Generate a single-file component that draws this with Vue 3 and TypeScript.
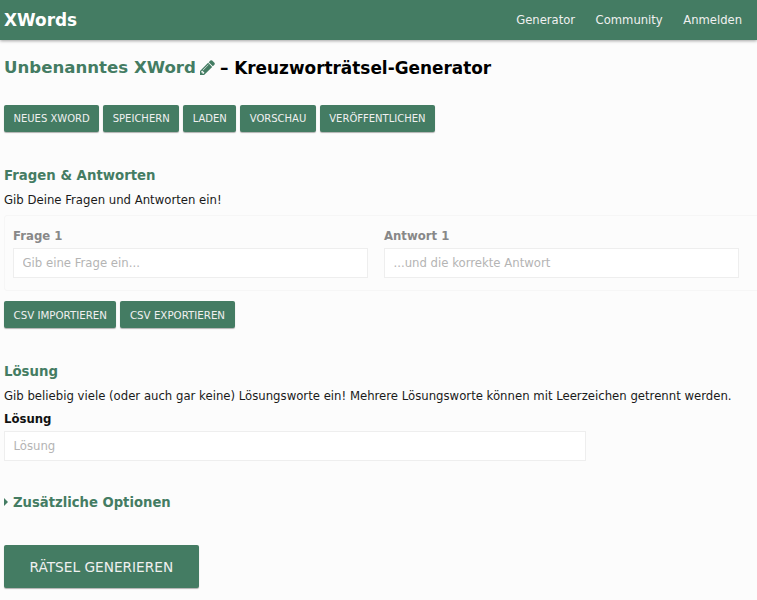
<script setup lang="ts">
const topButtons = ['Neues XWord', 'Speichern', 'Laden', 'Vorschau', 'Veröffentlichen']
const csvButtons = ['CSV importieren', 'CSV exportieren']
const navLinks = ['Generator', 'Community', 'Anmelden']
</script>

<template>
  <div class="page">
    <nav class="navbar">
      <span class="brand">XWords</span>
      <div class="links">
        <a v-for="link in navLinks" :key="link">{{ link }}</a>
      </div>
    </nav>

    <main class="content">
      <h1>
        <span class="name">Unbenanntes XWord</span>
        <svg class="pencil" viewBox="0 0 1536 1536" width="15" height="15">
          <path fill="#447c63" d="M363 1408l91-91-235-235-91 91v107h128v128h107zm523-928q0-22-22-22-10 0-17 7L305 1007q-7 7-7 17 0 22 22 22 10 0 17-7l542-542q7-7 7-17zm-54-192l416 416-832 832H0v-416zm683 96q0 53-37 90l-166 166-416-416 166-165q36-38 90-38 53 0 91 38l235 234q37 39 37 91z" />
        </svg>
        <span class="dash">– Kreuzworträtsel-Generator</span>
      </h1>

      <div class="btn-row top-row">
        <button v-for="b in topButtons" :key="b" class="btn">{{ b }}</button>
      </div>

      <h2 class="first">Fragen &amp; Antworten</h2>
      <p>Gib Deine Fragen und Antworten ein!</p>

      <div class="qa-box">
        <div class="qa-field">
          <label>Frage 1</label>
          <input type="text" placeholder="Gib eine Frage ein..." />
        </div>
        <div class="qa-field">
          <label>Antwort 1</label>
          <input type="text" placeholder="...und die korrekte Antwort" />
        </div>
      </div>

      <div class="btn-row csv-row">
        <button v-for="b in csvButtons" :key="b" class="btn btn-csv">{{ b }}</button>
      </div>

      <h2 class="second">Lösung</h2>
      <p>Gib beliebig viele (oder auch gar keine) Lösungsworte ein! Mehrere Lösungsworte können mit Leerzeichen getrennt werden.</p>
      <label class="solution-label">Lösung</label>
      <input class="solution" type="text" placeholder="Lösung" />

      <div class="options">
        <span class="arrow"></span>
        <span>Zusätzliche Optionen</span>
      </div>

      <button class="btn btn-large">Rätsel generieren</button>
    </main>
  </div>
</template>

<style>
html, body {
  margin: 0;
  overflow: hidden;
  background: #fcfcfc;
}
</style>

<style scoped>
.page {
  width: 757px;
  height: 600px;
  overflow: hidden;
  font-family: "DejaVu Sans", Verdana, sans-serif;
  font-size: 11.7px;
  color: #1a1a1a;
  background: #fcfcfc;
}

.navbar {
  height: 40px;
  background: #447c63;
  box-shadow: 0 1px 3px rgba(0, 0, 0, 0.35);
  display: flex;
  align-items: center;
  justify-content: space-between;
  padding: 0 15px 0 4px;
  color: #f0f0f0;
}

.brand {
  font-size: 16.9px;
  font-weight: bold;
  color: #fff;
}

.links {
  display: flex;
  gap: 20.5px;
  font-size: 11.6px;
}

.content {
  padding: 0 0 0 4px;
}

h1 {
  margin: 18px 0 0;
  height: 20px;
  line-height: 20px;
  font-size: 16.6px;
  font-weight: bold;
  display: flex;
  align-items: center;
  gap: 5px;
  white-space: nowrap;
}

.name {
  color: #447c63;
}

.pencil {
  margin: 0 0 2px -1px;
}

.dash {
  color: #000;
  font-size: 16.9px;
}

.btn-row {
  display: flex;
  gap: 4px;
}

.top-row {
  margin-top: 27px;
}

.btn {
  height: 27px;
  padding: 0 8.5px;
  border: 1px solid transparent;
  border-radius: 2px;
  background: #447c63;
  box-shadow: 0 1px 1px rgba(0, 0, 0, 0.3);
  color: #f0f0f0;
  font-family: inherit;
  font-size: 10px;
  text-transform: uppercase;
}

.btn-csv {
  font-size: 10.25px;
}

h2 {
  margin: 0;
  height: 18px;
  line-height: 18px;
  font-size: 13.3px;
  font-weight: bold;
  color: #447c63;
}

h2.first {
  margin-top: 35px;
}

h2.second {
  margin-top: 35px;
}

p {
  margin: 8px 0 0;
  height: 15px;
  line-height: 15px;
  white-space: nowrap;
}

.qa-box {
  margin-top: 7px;
  width: 770px;
  height: 76px;
  box-sizing: border-box;
  border: 1px solid #f6f6f6;
  border-radius: 3px;
  padding: 12px 8px;
  display: flex;
  gap: 16px;
}

.qa-field {
  width: 355px;
  display: flex;
  flex-direction: column;
}

.qa-field label {
  height: 20px;
  line-height: 16px;
  font-weight: bold;
  color: #888;
}

input {
  box-sizing: border-box;
  height: 30px;
  border: 1px solid #eee;
  background: #fff;
  padding: 0 8.5px;
  font-family: inherit;
  font-size: 11.7px;
  outline: none;
}

input::placeholder {
  color: #b4b4b4;
}

.csv-row {
  margin-top: 10px;
}

.solution-label {
  display: block;
  margin-top: 7px;
  height: 20px;
  line-height: 16px;
  font-weight: bold;
  color: #111;
}

.solution {
  display: block;
  width: 582px;
}

.options {
  margin-top: 32px;
  height: 18px;
  display: flex;
  align-items: center;
  gap: 5px;
  font-size: 13.2px;
  font-weight: bold;
  color: #447c63;
}

.arrow {
  width: 0;
  height: 0;
  border-left: 4px solid #447c63;
  border-top: 4px solid transparent;
  border-bottom: 4px solid transparent;
}

.btn.btn-large {
  display: block;
  margin-top: 34px;
  height: 43px;
  padding: 0 24.5px;
  font-size: 13.7px;
}
</style>
